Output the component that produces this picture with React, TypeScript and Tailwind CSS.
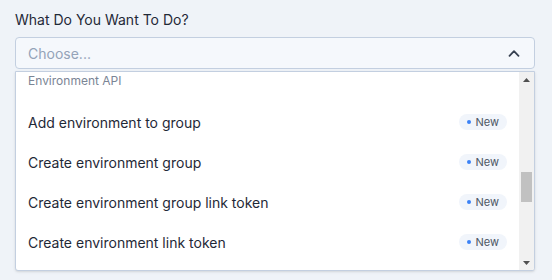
const environment = [
  { name: 'Add environment to group', isNew: true },
  { name: 'Create environment group', isNew: true },
  { name: 'Create environment group link token', isNew: true },
  { name: 'Create environment link token', isNew: true },
];

function NewBadge() {
  return (
    <span className="flex h-4 items-center gap-[4px] rounded-full bg-[#f1f5fb] px-[8px] text-[11px] leading-none text-[#4b5563]">
      <span className="h-1 w-1 rounded-full bg-[#3b82f6]" />
      New
    </span>
  );
}

function Option({ name, isNew }: any) {
  return (
    <div className="flex h-10 shrink-0 items-center justify-between px-3 text-[14px] text-[#1f2937]">
      <span>{name}</span>
      {isNew && <NewBadge />}
    </div>
  );
}

function Scrollbar() {
  return (
    <div className="flex w-[15px] shrink-0 flex-col bg-[#f1f1f1]">
      <div className="flex h-[15px] items-center justify-center">
        <svg width="7" height="4" viewBox="0 0 7 4">
          <polygon points="0,4 3.5,0 7,4" fill="#505050" />
        </svg>
      </div>
      <div className="h-[85px]" />
      <div className="mx-[2px] h-[30px] bg-[#c1c1c1]" />
      <div className="flex-1" />
      <div className="flex h-[15px] items-center justify-center">
        <svg width="7" height="4" viewBox="0 0 7 4">
          <polygon points="0,0 7,0 3.5,4" fill="#505050" />
        </svg>
      </div>
    </div>
  );
}

export default function App() {
  return (
    <div
      className="h-[280px] w-[552px] bg-[#eff3f8] px-[15px] pt-[10px]"
      style={{ fontFamily: 'Inter, "Noto Sans", sans-serif' }}
    >
      <div className="mb-[7px] text-[14px] leading-5 text-[#1f2937]">
        What Do You Want To Do?
      </div>

      <div className="flex h-8 w-[520px] items-center justify-between rounded-[4px] border border-[#c3cfe0] bg-[#f5f8fc] pl-3 pr-[14px]">
        <span className="text-[14px] text-[#94a3b8]">Choose...</span>
        <svg width="12" height="8" viewBox="0 0 12 8" fill="none">
          <polyline
            points="1.5,6.8 6,2.2 10.5,6.8"
            stroke="#374151"
            strokeWidth="1.8"
            strokeLinecap="round"
            strokeLinejoin="round"
          />
        </svg>
      </div>

      <div className="mt-[2px] flex h-[200px] w-[520px] overflow-hidden rounded-b-[3px] border border-[#c3cfe0] bg-white shadow-sm">
        <div className="flex min-w-0 flex-1 flex-col">
          <div className="h-[30px] shrink-0 px-3 pt-[1px] text-[12px] leading-4 text-[#7b8595]">
            Environment API
          </div>
          {environment.map((o) => (
            <Option key={o.name} name={o.name} isNew={o.isNew} />
          ))}
        </div>
        <Scrollbar />
      </div>
    </div>
  );
}
